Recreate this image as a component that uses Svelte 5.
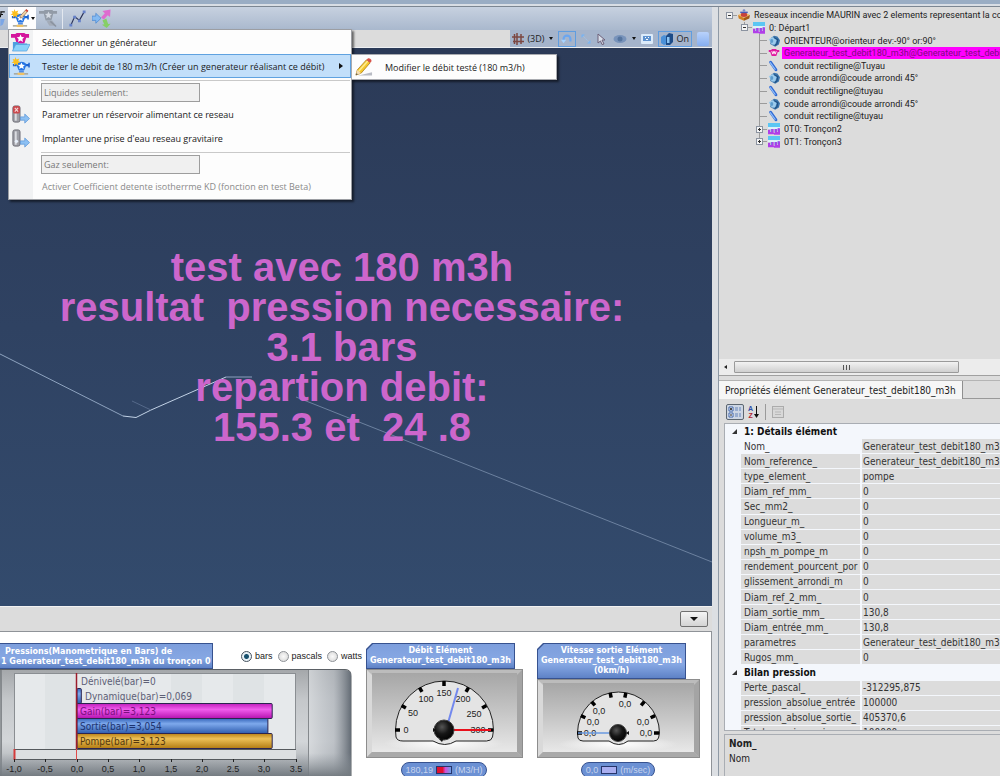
<script>
  const tree = [
    { depth: 0, box: '-', icon: 'network', label: 'Reseaux incendie MAURIN avec 2 elements representant la contrainte' },
    { depth: 1, box: '-', icon: 'section', label: '0: Départ1' },
    { depth: 2, icon: 'elbow', label: 'ORIENTEUR@orienteur dev:-90° or:90°' },
    { depth: 2, icon: 'pump', label: 'Generateur_test_debit180_m3h@Generateur_test_debit180_m3h', selected: true },
    { depth: 2, icon: 'pipe', label: 'conduit rectiligne@Tuyau' },
    { depth: 2, icon: 'elbow', label: 'coude arrondi@coude arrondi 45°' },
    { depth: 2, icon: 'pipe', label: 'conduit rectiligne@tuyau' },
    { depth: 2, icon: 'elbow', label: 'coude arrondi@coude arrondi 45°' },
    { depth: 2, icon: 'pipe', label: 'conduit rectiligne@tuyau' },
    { depth: 2, box: '+', icon: 'section', label: '0T0: Tronçon2' },
    { depth: 2, box: '+', icon: 'section', label: '0T1: Tronçon3', last: true }
  ];

  const groups = [
    {
      title: '1: Détails élément',
      rows: [
        ['Nom_', 'Generateur_test_debit180_m3h'],
        ['Nom_reference_', 'Generateur_test_debit180_m3h'],
        ['type_element_', 'pompe'],
        ['Diam_ref_mm_', '0'],
        ['Sec_mm2_', '0'],
        ['Longueur_m_', '0'],
        ['volume_m3_', '0'],
        ['npsh_m_pompe_m', '0'],
        ['rendement_pourcent_por', '0'],
        ['glissement_arrondi_m', '0'],
        ['Diam_ref_2_mm_', '0'],
        ['Diam_sortie_mm_', '130,8'],
        ['Diam_entrée_mm_', '130,8'],
        ['parametres', 'Generateur_test_debit180_m3h'],
        ['Rugos_mm_', '0']
      ]
    },
    {
      title: 'Bilan pression',
      rows: [
        ['Perte_pascal_', '-312295,875'],
        ['pression_absolue_entrée', '100000'],
        ['pression_absolue_sortie_', '405370,6'],
        ['Total_pression_gain_', '100000']
      ]
    }
  ];

  const bars = [
    { label: 'Dénivelé(bar)=0', value: 0, fill: '' },
    { label: 'Dynamique(bar)=0,069', value: 0.069, fill: 'url(#barBlue)' },
    { label: 'Gain(bar)=3,123', value: 3.123, fill: 'url(#barPink)' },
    { label: 'Sortie(bar)=3,054', value: 3.054, fill: 'url(#barBlue)' },
    { label: 'Pompe(bar)=3,123', value: 3.123, fill: 'url(#barGold)' }
  ];
  const axis = ['-1,0', '-0,5', '0,0', '0,5', '1,0', '1,5', '2,0', '2.5', '3,0', '3.5'];
  const axisX = (i) => 14 + Math.round(i * 31.3);

  const flowTicks = [180, 150, 120, 90, 60, 30, 0];
  const flowLabels = [
    ['0', 40, 64], ['50', 47, 47], ['100', 60, 33], ['150', 78, 27],
    ['200', 97, 33], ['250', 108, 48], ['300', 112, 64]
  ];
  const speedTicks = [180, 155, 130, 101, 79, 50, 25, 0];
  const speedLabels = [
    ['0,0', 53, 57], ['0,0', 56, 46], ['0,0', 62, 35],
    ['0,0', 88, 28], ['0,0', 106, 46], ['0,0', 109, 57]
  ];
  const tick = (cx, cy, r, a) => {
    const c = Math.cos((a * Math.PI) / 180);
    const s = Math.sin((a * Math.PI) / 180);
    return { x1: cx + c * (r - 5), y1: cy - s * (r - 5), x2: cx + c * r, y2: cy - s * r };
  };
  let unit = $state('bars');
</script>

{#snippet pumpIcon(pencil)}
  <svg class="ico" viewBox="0 0 20 20" aria-hidden="true">
    <path d="M2 8.500h4M14 8.500h5" stroke="#1d62cf" stroke-width="2.500" />
    <path d="M19 6v5" stroke="#1d62cf" stroke-width="1.600" />
    <path d="M5.500 7.500q5.500-5 11 0l-2.500 6.500H8z" fill="#2474e4" />
    <path d="M11 5.800l1.200 2.300 2.500.3-1.900 1.700.6 2.600-2.400-1.300-2.400 1.300.6-2.600-1.900-1.700 2.500-.3z" fill="#fff" />
    <path d="M8.500 14h5v2.500h-5z" fill="#4c8be8" />
    <path d="M3 17h15v1.500H3z" fill="#a3a397" />
    <path d="M7 16.500h7v2.500H7z" fill="#efc266" />
    <path d="M4.500 0l1.300 2.600L8.800 1.600 7.600 4.200l2.400 1.300-2.800.7.4 2.800-2.300-1.600L3 9.200l.3-2.800L.5 6l2.400-1.400L1.600 2l2.500.7z" fill="#fcbf1e" />
    {#if pencil}
      <path d="M11 7l6-6.500 2 1.500-6 7-2.500.5z" fill="#efcfa0" stroke="#8a6450" stroke-width=".7" />
      <path d="M16 1.600L17.300.3l2 1.500L18 3.200z" fill="#d6443a" />
    {/if}
  </svg>
{/snippet}

{#snippet tankIcon(red)}
  <svg class="ico" viewBox="0 0 20 20" aria-hidden="true">
    <rect x="2" y="1" width="7.500" height="17" rx="2" fill="#9fa0a7" stroke="#6b6c74" />
    <rect x="4" y="2.500" width="2" height="14" fill="#dcdde2" />
    {#if red}
      <rect x="2" y="1" width="7.500" height="8" rx="2" fill="#c94a4e" />
      <path d="M4 3l3.500 4M7.500 3L4 7" stroke="#f5d8d8" stroke-width="1.200" />
    {:else}
      <circle cx="5.700" cy="13" r="1.800" fill="#e8f0fb" />
    {/if}
    <path d="M10 12.500h4.500V9.500l5 4.800-5 4.700v-3H10z" fill="#8cc0f3" stroke="#5c97d8" stroke-width=".8" />
  </svg>
{/snippet}

{#snippet treeIcon(kind)}
  <svg class="tico" viewBox="0 0 16 16" aria-hidden="true">
    {#if kind === 'network'}
      <path d="M0 8l8-3.500L16 8l-8 4z" fill="#f5b557" />
      <path d="M0 8l8 4v3.500L1 12.500z" fill="#cf8023" />
      <path d="M16 8l-8 4v3.500l7-3z" fill="#a45a15" />
      <path d="M4 6q4-3 8 0v3.500q-4 2-8 0z" fill="#c8433b" /><path d="M3 3.500h10V5.500H3z" fill="#4a5cb4" />
      <circle cx="8" cy="2" r="1.800" fill="#7989c8" />
    {:else if kind === 'section'}
      <rect x="0" y="0" width="16" height="5.500" fill="#5cc6f3" />
      <rect x="0" y="5.500" width="16" height="2.500" fill="#dff3fb" />
      <path d="M0 15V9h3v3h1.500V8h3v5H9V8h3v4h1V7h3v8.500H8V15z" fill="#b13fe8" />
      <path d="M4.500 8v4M9.500 8v4M13.500 7v4" stroke="#5d6ce8" />
    {:else if kind === 'elbow'}
      <path d="M4 4l4-3 4.500 1L16 7l-1.500 5.500-5 3L3 12z" fill="#3a74ab" />
      <path d="M1 5.500l5.500-3 5 4.500-2 6-4.500-.5z" fill="#9ccbec" />
      <path d="M8 3.500l5 2.500-1 5.500-3 2.500" stroke="#1f4f82" stroke-width="1.400" fill="none" />
      <ellipse cx="5" cy="8" rx="2" ry="2.800" fill="#5c9bcc" />
    {:else if kind === 'pump'}
      <path d="M1 4h3l1.500-1.500h5L12 4h3v2.500h-2L11 12H5L3 6.500H1z" fill="#e0189f" />
      <path d="M5 5.500l1.500 4L8 5.500l1.500 4 1.500-4" stroke="#fff" stroke-width="1.200" fill="none" />
    {:else}
      <path d="M3.500 3l7 10" stroke="#2f6ad6" stroke-width="4" stroke-linecap="round" />
      <path d="M3 3.500l6.500 9" stroke="#92bef8" stroke-width="1.500" stroke-linecap="round" />
    {/if}
  </svg>
{/snippet}

<div class="app">
  <div class="strip"></div>
  <main class="left">
    <div class="toolbar">
      <svg class="cut" viewBox="0 0 6 20" aria-hidden="true">
        <path d="M0 2h5M1 2L0 8M0 5h3" stroke="#111" stroke-width="1.300" />
        <path d="M0 10h5l-2 6-3 2z" fill="#7ba6e6" />
      </svg>
      <div class="split">
        <button class="tool open" aria-label="Générateur">
          {@render pumpIcon(true)}
          <span class="caret"></span>
        </button>
        <div class="menu" role="menu">
          <button class="item" role="menuitem">
            <svg class="ico" viewBox="0 0 20 20" aria-hidden="true">
              <path d="M0 1h4.500l1.500-1h8l1.500 1H19v4h-3l-2 6H6L4 5H0z" fill="#d4149c" />
              <path d="M10 1.500l1.200 2.600 2.800.3-2 2 .6 3-2.600-1.500-2.600 1.500.6-3-2-2 2.800-.3z" fill="#fff" />
              <path d="M2 9.500h5l1.500 1.500H17V18H2z" fill="#4d9fe0" />
              <path d="M5 12h15l-3.500 7H1.500z" fill="#8bd2fa" stroke="#4d9cdc" stroke-width=".7" />
            </svg>
            <span>Sélectionner un générateur</span>
          </button>
          <div class="sub">
            <button class="item hot" role="menuitem">
              {@render pumpIcon(false)}
              <span>Tester le debit de 180 m3/h (Créer un generateur réalisant ce débit)</span>
              <i class="more"></i>
            </button>
            <div class="submenu" role="menu">
              <button class="item" role="menuitem">
                <svg class="ico" viewBox="0 0 20 20" aria-hidden="true">
                  <path d="M7 18l12-3v3.500H4z" fill="#b9bcc4" />
                  <path d="M2 18l1.500-5.500L13 2l4 3L7.500 16z" fill="#f5c72c" stroke="#a87912" stroke-width=".8" />
                  <path d="M5 14L14.500 3.200" stroke="#fdec92" stroke-width="1.500" />
                  <path d="M13 2l1.500-1.500c1.500-1 4.500 1 3.800 3L17 5z" fill="#d9534a" />
                  <path d="M2 18l1.500-5.500L7.500 16z" fill="#f4dcb4" /><path d="M2 18l.6-2 1.400 1.200z" fill="#333" />
                </svg>
                <span>Modifier le débit testé (180 m3/h)</span>
              </button>
            </div>
          </div>
          <div class="sep"></div>
          <input class="field" aria-label="Liquides" value="Liquides seulement:" readonly />
          <button class="item" role="menuitem">{@render tankIcon(true)}<span>Parametrer un réservoir alimentant ce reseau</span></button>
          <button class="item" role="menuitem">{@render tankIcon(false)}<span>Implanter une prise d'eau reseau gravitaire</span></button>
          <div class="sep"></div>
          <input class="field" aria-label="Gaz" value="Gaz seulement:" readonly />
          <button class="item" role="menuitem" disabled><span class="noicon">Activer Coefficient detente isotherrme KD (fonction en test Beta)</span></button>
        </div>
      </div>
      <button class="tool" aria-label="Pompe" disabled>
        <svg class="ico" viewBox="0 0 20 20" aria-hidden="true">
          <path d="M0 2h5l1-1h8l1 1h4v3h-4l-2 7H7L5 5H0z" fill="#929ba7" />
          <path d="M10 2.500l1.100 2.600 2.600.2-1.900 1.900.6 2.700-2.400-1.400-2.400 1.400.6-2.700-1.900-1.900 2.600-.2z" fill="#d3d9e2" />
          <path d="M8 13l3 4.500h7L14 12z" fill="#a3abb7" /><path d="M12 13l6 5.500" stroke="#8a93a0" stroke-width="1.500" />
        </svg>
      </button>
      <i class="vsep"></i>
      <button class="tool" aria-label="Tracé">
        <svg class="ico" viewBox="0 0 20 20" aria-hidden="true">
          <path d="M3 17l4-9 5 4 5-9" stroke="#2b3358" stroke-width="1.200" fill="none" />
          <path d="M1.500 15.500h3v3h-3zM5.500 7h3v3h-3zM10.500 11h3v3h-3zM15.500 1.500h3v3h-3z" fill="#6580c8" />
        </svg>
      </button>
      <button class="tool" aria-label="Répartition">
        <svg class="ico" viewBox="0 0 20 20" aria-hidden="true">
          <path d="M0 7.500h4V4.500l5.500 5.300L4 15v-3H0z" fill="#84baf2" stroke="#4a88d2" stroke-width=".8" />
          <path d="M9.500 9l4-4.500L11 2l8.500-1.500-.5 8-2.500-2L12.500 11z" fill="#de6ccf" />
          <path d="M11 12l2 4-2.500.5 5 3.500 4-4.500-2.500.2L15 10z" fill="#86cf66" />
        </svg>
      </button>
    </div>

    <div class="viewbar">
      <div class="viewtools">
        <button class="vt">
          <svg width="12" height="12" viewBox="0 0 12 12" aria-hidden="true"><path d="M2.500 1v10M5 0v12M9 1v10M0 4h12M1 8.500h11" stroke="#7c4742" stroke-width="1.500" /></svg>
          (3D)
        </button>
        <i class="caret"></i>
        <button class="vt on" aria-label="Rotation">
          <svg width="12" height="12" viewBox="0 0 14 14" aria-hidden="true"><path d="M3 10V7a4 4 0 018 0v3" fill="none" stroke="#6ba6f0" stroke-width="2.500" /><path d="M0 8l3 4 3-4z" fill="#a6d3ff" /></svg>
        </button>
        <button class="vt" aria-label="Déplacer">
          <svg width="10" height="12" viewBox="0 0 12 12" aria-hidden="true"><path d="M1 1h3L1 4zM11 8v3H8z" fill="#7eb4ee" stroke="#7eb4ee" /><path d="M3 3l6 6" stroke="#9cc8f4" stroke-dasharray="2 1.500" /></svg>
        </button>
        <button class="vt" aria-label="Sélection">
          <svg width="12" height="12" viewBox="0 0 12 12" aria-hidden="true"><path d="M2 1l7 6H6l2 4-2 .5L4.500 8 2 10z" fill="#d8deea" stroke="#6d6078" /></svg>
        </button>
        <button class="vt" aria-label="Visibilité">
          <svg width="14" height="10" viewBox="0 0 14 10" aria-hidden="true"><ellipse cx="7" cy="5" rx="6.500" ry="4" fill="#7893bb" /><circle cx="7" cy="5" r="2.500" fill="#54749f" /></svg>
        </button>
        <i class="caret"></i>
        <button class="vt" aria-label="Cadrer">
          <svg width="12" height="12" viewBox="0 0 12 12" aria-hidden="true"><rect x="0" y="1" width="12" height="10" rx="1" fill="#dcebfa" /><rect x="2" y="3" width="8" height="5" fill="#5f92cf" /><path d="M4 4h1v1H4zM7 4h1v1H7zM5 6h2v1H5z" fill="#fff" /></svg>
        </button>
        <button class="vt on">
          <svg width="12" height="12" viewBox="0 0 12 12" aria-hidden="true"><path d="M0 4l3-2 3 1v8l-3 1-3-2z" fill="#4a90d8" /><path d="M5 3l3-3 4 1v8l-3 3H5z" fill="#1d4c88" /><path d="M6 4h2.500v6H6z" fill="#8ac3f2" /></svg>
          On
        </button>
        <button class="vt swatch" aria-label="Fond"></button>
      </div>
    </div>

    <section class="scene">
      <svg class="lines" viewBox="0 0 712 558" preserveAspectRatio="none" aria-hidden="true">
        <g fill="none" stroke="#8ea3bf">
          <path d="M0 306L123 368" stroke-width="1" />
          <path d="M123 368L136 369.500 151 362 226 329" stroke="#c2d2e6" />
          <path d="M132 353L151 362" stroke="#55698a" />
          <path d="M226 329H252" stroke="#8ba0bd" />
          <path d="M296 349L712 514" stroke="#6c819f" />
        </g>
      </svg>
      <p class="caption">test avec 180 m3h<br />resultat&nbsp; pression necessaire:<br />3.1 bars<br />repartion debit:<br />155.3 et&nbsp; 24 .8</p>
    </section>

    <div class="dropbar"><button class="drop" aria-label="Réduire"><i></i></button></div>

    <section class="dash">
      <div class="pressure">
        <div class="head">
          <h2 class="plate wide"><span>Pressions(Manometrique en Bars) de</span><br />1 Generateur_test_debit180_m3h du tronçon 0</h2>
          <div class="units" role="radiogroup" aria-label="Unité">
            {#each ['bars', 'pascals', 'watts'] as u}
              <label><input type="radio" name="unit" value={u} bind:group={unit} />{u}</label>
            {/each}
          </div>
        </div>
        <svg class="chart" width="352" height="108" viewBox="0 0 352 108" role="img" aria-label="Pressions">
          <defs>
            <linearGradient id="metal" x1="0" y1="0" x2="0" y2="1">
              <stop offset="0" stop-color="#a4a7aa" /><stop offset=".25" stop-color="#c4c7ca" /><stop offset=".6" stop-color="#d3d6d9" /><stop offset="1" stop-color="#8e9398" />
            </linearGradient>
            <linearGradient id="side" x1="0" y1="0" x2="1" y2="0">
              <stop offset="0" stop-color="#d9dcdf" stop-opacity=".8" /><stop offset=".6" stop-color="#b4b9bf" stop-opacity=".7" /><stop offset="1" stop-color="#646c75" />
            </linearGradient>
            <linearGradient id="foot" x1="0" y1="0" x2="0" y2="1">
              <stop offset="0" stop-color="#8e959c" stop-opacity="0" /><stop offset="1" stop-color="#72797f" />
            </linearGradient>
            <linearGradient id="barPink" x1="0" y1="0" x2="0" y2="1"><stop offset="0" stop-color="#c01fbb" /><stop offset=".4" stop-color="#f05cec" /><stop offset="1" stop-color="#b512b0" /></linearGradient>
            <linearGradient id="barBlue" x1="0" y1="0" x2="0" y2="1"><stop offset="0" stop-color="#3767bb" /><stop offset=".35" stop-color="#7ea9ec" /><stop offset="1" stop-color="#2e5cae" /></linearGradient>
            <linearGradient id="barGold" x1="0" y1="0" x2="0" y2="1"><stop offset="0" stop-color="#b98116" /><stop offset=".35" stop-color="#edc057" /><stop offset="1" stop-color="#b27b12" /></linearGradient>
          </defs>
          <path d="M0 .5H345q6 0 6 6V120H0z" fill="url(#metal)" stroke="#5b6065" />
          <path d="M308 1H345q6 0 6 6V108H308z" fill="url(#side)" />
          <path d="M1.500 1v107M308.500 1v107" stroke="#85898d" />
          <rect x="0" y="84" width="351" height="24" fill="url(#foot)" />
          <rect x="14.500" y="4.500" width="281" height="86" fill="#e6e9eb" stroke="#8a8e92" />
          {#each axis as _, i}
            {#if i % 2 === 1 && i < 9}<rect x={axisX(i)} y="5" width="31" height="75" fill="#dfe3e5" />{/if}
          {/each}
          <rect x="15" y="80" width="281" height="10" fill="#dcdfe1" />
          <path d="M14 80.500H296M14 90.500H296" stroke="#55595d" />
          <path d="M14.500 80V91" stroke="#d43a3a" stroke-width="2" />
          {#each bars as b, i}
            {#if b.value}
              <rect x="77" y={19.500 + (i - 1) * 15} width={b.value * 62.500} height="15" rx="1" fill={b.fill} stroke="#2b2450" />
            {/if}
            <text x={i === 0 ? 81 : i === 1 ? 85 : 80} y={16 + i * 15} class="bar b{i}">{b.label}</text>
          {/each}
          <path d="M76.500 4V80" stroke="#9c1c2c" stroke-width="1.500" /><path d="M76.500 80V91" stroke="#e04a4a" />
          {#each axis as a, i}
            <path d="M{axisX(i) + 0.5} 90v3" stroke="#222" />
            <text x={axisX(i)} y="103" class="num" text-anchor="middle">{a}</text>
          {/each}
        </svg>
      </div>

      <div class="gauge">
        <div class="plate"><h2>Débit Elément<br />Generateur_test_debit180_m3h</h2></div>
        <svg class="dial" width="157" height="89" viewBox="0 0 157 89" role="img" aria-label="Débit">
          <defs>
            <linearGradient id="plateGrey" x1="0" y1="0" x2="0" y2="1"><stop offset="0" stop-color="#a6a6a6" /><stop offset=".5" stop-color="#c6c6c6" /><stop offset="1" stop-color="#e8e8e8" /></linearGradient>
            <radialGradient id="glow"><stop offset="0" stop-color="#fff" /><stop offset="1" stop-color="#fff" stop-opacity="0" /></radialGradient>
            <radialGradient id="knob" cx=".4" cy=".35" r=".7"><stop offset="0" stop-color="#555" /><stop offset=".5" stop-color="#161616" /><stop offset="1" stop-color="#000" /></radialGradient>
          </defs>
          <rect x=".5" y=".5" width="156" height="88" fill="#bcbcbc" stroke="#8d8d8d" />
          <path d="M1 1l5 5v77l-5 5z" fill="#d9d9d9" /><path d="M156 1l-5 5v77l5 5z" fill="#a4a4a4" /><path d="M1 88l5-5h145l5 5z" fill="#a9a9a9" />
          <rect x="6" y="4" width="145" height="79" fill="url(#plateGrey)" />
          <ellipse cx="78" cy="74" rx="60" ry="9" fill="url(#glow)" />
          <path d="M29.500 61a49 49 0 0198 0l-1 7q-1 4-6 4H90q-11 7-23 0H37q-6 0-7-4z" fill="#e4e4e4" stroke="#222" />
          {#each flowTicks as a}
            <line {...tick(78, 61, 49, a)} stroke="#000" stroke-width="3.500" />
          {/each}
          {#each flowLabels as [t, x, y]}
            <text {x} {y} class="num" text-anchor="middle">{t}</text>
          {/each}
          <path d="M80 61L92 19" stroke="#7288ee" stroke-width="2" />
          <path d="M78 61H125" stroke="#e8101c" stroke-width="2" />
          <circle cx="78" cy="61" r="10" fill="url(#knob)" stroke="#444" /><path d="M67 59v4l3-2zM73 70l5-1-2 4z" fill="#111" />
        </svg>
        <output class="pill">180,19 <i class="red"></i> (M3/H)</output>
      </div>

      <div class="gauge second">
        <div class="plate"><h2>Vitesse sortie Elément<br />Generateur_test_debit180_m3h<br />(0km/h)</h2></div>
        <svg class="dial" width="163" height="79" viewBox="0 0 163 79" role="img" aria-label="Vitesse">
          <rect x=".5" y=".5" width="162" height="78" fill="#bcbcbc" stroke="#8d8d8d" />
          <path d="M1 1l5 5v67l-5 5z" fill="#d9d9d9" /><path d="M162 1l-5 5v67l5 5z" fill="#a4a4a4" /><path d="M1 78l5-5h151l5 5z" fill="#a9a9a9" />
          <rect x="6" y="4" width="151" height="69" fill="url(#plateGrey)" />
          <ellipse cx="81" cy="65" rx="60" ry="8" fill="url(#glow)" />
          <path d="M40.500 54a41 41 0 0182 0l-1 5q-1 3-5 3H91q-9 7-19 0H46q-4 0-5-3z" fill="#e4e4e4" stroke="#222" />
          {#each speedTicks as a}
            <line {...tick(81, 54, 41, a)} stroke="#000" stroke-width="3.500" />
          {/each}
          {#each speedLabels as [t, x, y]}
            <text {x} {y} class="num" text-anchor="middle">{t}</text>
          {/each}
          <path d="M41 54H72" stroke="#6a9ae0" stroke-width="1.500" />
          <circle cx="81" cy="54" r="8.500" fill="url(#knob)" stroke="#444" /><path d="M92 52v4l-3-2z" fill="#111" />
        </svg>
        <output class="pill small">0,0 <i></i> (m/sec)</output>
      </div>
    </section>
  </main>

  <aside class="right">
    <ul class="tree" role="tree">
      {#each tree as n}
        <li role="treeitem" aria-selected={!!n.selected} class="d{n.depth}">
          <span class="joint" class:last={n.last} class:root={n.depth === 0}>
            {#if n.box}<b class:plus={n.box === '+'}></b>{/if}
          </span>
          {@render treeIcon(n.icon)}
          <span class="tlabel" class:sel={n.selected}>{n.label}</span>
        </li>
      {/each}
    </ul>
    <div class="hscroll"><i class="arrow"></i><span class="thumb"><i></i></span></div>

    <div class="tabs"><button class="tab">Propriétés élément Generateur_test_debit180_m3h</button></div>
    <div class="ptools">
      <button class="pt pressed" aria-label="Par catégorie">
        <svg width="14" height="12" viewBox="0 0 14 12" aria-hidden="true"><path d="M1 1h4v4H1zM1 7h4v4H1z" fill="#fff" stroke="#3c62a8" /><path d="M3 2v2M2 3h2M2 9h2" stroke="#111" /><path d="M7 2h3M11 2h2M7 4h3M11 4h2M7 8h3M11 8h2M7 10h3M11 10h2" stroke="#6584bb" /></svg>
      </button>
      <button class="pt az" aria-label="Alphabétique"><span><em>A</em><em>Z</em></span>
        <svg width="5" height="12" viewBox="0 0 5 12" aria-hidden="true"><path d="M2.500 0v9" stroke="#111" /><path d="M0 8h5L2.500 12z" fill="#111" /></svg>
      </button>
      <i class="psep"></i>
      <button class="pt" aria-label="Pages" disabled>
        <svg width="12" height="12" viewBox="0 0 12 12" aria-hidden="true"><rect x=".5" y=".5" width="11" height="11" fill="#d8d8d8" stroke="#ababab" /><path d="M1 3h10M3 6h6M3 8.500h6" stroke="#b7b7b7" /></svg>
      </button>
    </div>
    <div class="grid">
      <table>
        <colgroup><col class="c0" /><col class="c1" /><col /></colgroup>
        <tbody>
          {#each groups as g, gi}
            <tr class="cat"><td class="m"><i></i></td><th colspan="2">{g.title}</th></tr>
            {#each g.rows as r, ri}
              <tr class:current={gi === 0 && ri === 0}><td class="m"></td><td>{r[0]}</td><td>{r[1]}</td></tr>
            {/each}
          {/each}
        </tbody>
      </table>
    </div>
    <div class="help"><strong>Nom_</strong><span>Nom</span></div>
  </aside>
</div>

<style>
  :global(body) { margin: 0; background: #dcdcdc; }
  .app {
    display: grid;
    grid-template-columns: minmax(0, 719fr) minmax(0, 281fr);
    grid-template-rows: 7px minmax(0, 1fr);
    height: 100vh;
    overflow: hidden;
    font-family: "Open Sans", sans-serif;
    font-size: 9px;
    color: #222;
    background: #dcdcdc;
  }
  button { font: inherit; color: inherit; border: 0; background: none; padding: 0; margin: 0; }
  h2 { margin: 0; }
  .strip { grid-column: 1 / -1; box-sizing: border-box; background: #9aadc4; border-bottom: 1px solid #7c8692; box-shadow: inset 0 -2px #d8dde4; }

  .left { display: flex; flex-direction: column; min-width: 0; padding-right: 6px; border-right: 1px solid #8f9aa6; background: #dcdfe3; }
  .toolbar { display: flex; align-items: center; height: 23px; background: linear-gradient(#c7d1e0, #a9b8cd); }
  .cut { width: 6px; height: 18px; margin-right: 2px; }
  .split { position: relative; align-self: stretch; display: flex; }
  .tool { display: flex; align-items: center; justify-content: center; width: 24px; }
  .tool.open { width: 28px; gap: 2px; background: #fdfdfe; }
  .ico { width: 19px; height: 19px; flex: none; }
  .caret { border: 2px solid transparent; border-top: 3px solid #111; border-bottom: 0; width: 0; flex: none; }
  .vsep { width: 1px; height: 20px; margin: 0 2px; background: #e3e8ef; }

  .menu {
    position: absolute; z-index: 5; top: 22px; left: 0; width: 342px;
    display: flex; flex-direction: column; padding-bottom: 1px;
    border: 1px solid #9c9ea3; background: linear-gradient(90deg, #f1f2f3 24px, #fdfdfd 24px);
    box-shadow: 2px 2px 2px #0008;
    color: #1b1b1b;
  }
  .item { display: flex; align-items: center; height: 24px; width: 100%; padding: 0 2px; gap: 12px; text-align: left; white-space: nowrap; box-sizing: border-box; }
  .item:disabled { color: #8a8a8a; }
  .noicon { margin-left: 31px; }
  .hot { background: #c2dffa; box-shadow: inset 0 0 0 1px #5fa2e0; }
  .more { margin-left: auto; margin-right: 6px; border: 3px solid transparent; border-left: 4px solid #111; border-right: 0; }
  .sub { position: relative; }
  .submenu { position: absolute; left: 100%; top: 0; width: 206px; box-sizing: border-box; background: #fdfdfd; border: 1px solid #a9abb0; box-shadow: 2px 2px 2px #0008; }
  .sep { height: 1px; margin: 2px 1px 2px 32px; background: #c9c9c9; }
  .field { box-sizing: border-box; width: 159px; height: 19px; margin: 0 0 0 32px; padding: 0 2px; border: 1px solid #9d9d9d; background: #f0f0f0; color: #777; font: inherit; }

  .viewbar { display: flex; justify-content: flex-end; height: 17px; background: #dcdcdc; border-bottom: 1px solid #eef0f3; }
  .viewtools { display: flex; align-items: center; gap: 5px; padding: 0 3px 0 2px; background: #a5b4cb; }
  .vt { display: flex; align-items: center; justify-content: center; gap: 3px; height: 16px; }
  .vt.on { padding: 0 2px; box-sizing: border-box; border: 1px solid #5f9de0; }
  .swatch { width: 12px; height: 14px; border-radius: 2px; background: linear-gradient(#b9d2fb, #86aef0); }

  .scene { position: relative; flex: 1; min-height: 0; overflow: hidden; background: linear-gradient(#2b3a57, #2f4262 50%, #334b6d); }
  .lines { position: absolute; inset: 0; width: 100%; height: 100%; }
  .caption { position: relative; margin: 0; padding: 199px 28px 0 0; text-align: center; font: bold 40px/40px "Liberation Sans", Arial, sans-serif; color: #cc66cc; white-space: nowrap; }

  .dropbar { display: flex; justify-content: flex-end; align-items: center; height: 24px; padding-right: 4px; background: #dcdcdc; border-top: 1px solid #f1f1f1; }
  .drop { display: flex; align-items: center; justify-content: center; width: 28px; height: 16px; border: 1px solid #707070; border-radius: 2px; background: linear-gradient(#f4f4f4, #d4d4d4); box-sizing: border-box; }
  .drop i { border: 4px solid transparent; border-top: 4px solid #111; border-bottom: 0; }

  .dash { display: flex; height: 133px; padding-top: 11px; overflow: hidden; background: #fff; border-top: 1px solid #8f9398; border-right: 1px solid #8f9398; }
  .pressure { flex: 0 0 366px; }
  .head { display: flex; }
  .plate {
    font: bold 8px/10px "DejaVu Sans", sans-serif; color: #fff; text-align: center; white-space: nowrap;
    background: #37528f; padding: 1px; box-sizing: border-box;
  }
  .wide { width: 213px; height: 26px; padding: 3px 0 0 1px; text-align: left; background: linear-gradient(#7d9edc, #86a7e3 60%, #5e82c6); border: 1px solid #37528f; border-left: 0; }
  .wide span { margin-left: 4px; }
  .units { display: flex; align-items: center; gap: 5px; margin-left: 28px; font: 9px/12px "Liberation Sans", Arial, sans-serif; }
  .units label { display: flex; align-items: center; gap: 3px; }
  .units input {
    appearance: none; box-sizing: border-box; width: 11px; height: 11px; margin: 0; border: 1px solid #8d9196; border-radius: 50%;
    background: radial-gradient(#fafafa, #d5d5d5);
  }
  .units input:checked { border-color: #46525e; background: radial-gradient(circle, #17506e 0 2px, #e8f1f6 3px); }
  .chart, .dial { display: block; }
  .bar { font: 10px "DejaVu Sans Condensed", "DejaVu Sans", sans-serif; fill: #5d6076; }
  .b2 { fill: #7c0f80; }
  .b3 { fill: #1d3470; }
  .b4 { fill: #553a10; }
  .num { font: 9px "Liberation Sans", Arial, sans-serif; fill: #222; }

  .gauge { width: 157px; margin-right: 14px; flex: none; }
  .second { width: 163px; margin-right: 0; }
  .gauge .plate { width: 149px; clip-path: polygon(6px 0, 100% 0, 100% 100%, 0 100%, 0 6px); }
  .gauge h2 { font: inherit; padding: 2px 0; background: linear-gradient(#7d9edc, #86a7e3 60%, #5e82c6); clip-path: polygon(6px 0, 100% 0, 100% 100%, 0 100%, 0 6px); }
  .pill { display: flex; align-items: center; justify-content: center; gap: 3px; width: 86px; height: 16px; box-sizing: border-box; margin: 4px 0 0 35px; border: 1px solid #37528f; border-radius: 8px; background: #6c91d4; color: #c8d4ec; font: 9px "Liberation Sans", Arial, sans-serif; }
  .pill i { width: 14px; height: 6px; border: 1px solid #26356b; background: #a9aef0; }
  .pill .red { background: linear-gradient(90deg, #e01030 40%, #d050d8 60%, #6aa0e8); }
  .small { width: 74px; margin-left: 44px; }

  .right { display: flex; flex-direction: column; min-width: 0; background: #dcdcdc; }
  .tree { flex: none; display: grid; grid-auto-rows: 1fr; height: 139px; margin: 0; padding: 2px 0 0 3px; list-style: none; overflow: hidden; font: 9px Roboto, Arial, sans-serif; }
  .tree li { display: flex; align-items: center; min-height: 0; white-space: nowrap; }
  .tree .d1 { padding-left: 15px; }
  .tree .d2 { padding-left: 30px; }
  .joint { position: relative; align-self: stretch; display: flex; align-items: center; justify-content: center; width: 15px; flex: none; background: linear-gradient(#9b9b9b, #9b9b9b) 7px 0 / 1px 100% no-repeat, linear-gradient(#9b9b9b, #9b9b9b) 7px 50% / 8px 1px no-repeat; }
  .joint.last { background-size: 1px 50%, 8px 1px; }
  .joint.root { background-size: 0 0, 8px 1px; }
  .d1 .joint { background-size: 1px 50%, 8px 1px; }
  .joint b { width: 5px; height: 5px; border: 1px solid #8b93a0; background: linear-gradient(#333, #333) 50% 50% / 3px 1px no-repeat, #f4f4f4; }
  .joint b.plus { background: linear-gradient(#333, #333) 50% 50% / 3px 1px no-repeat, linear-gradient(#333, #333) 50% 50% / 1px 3px no-repeat, #f4f4f4; }
  .tico { width: 14px; height: 12px; flex: none; }
  .tlabel { padding: 0 2px; margin-left: 1px; line-height: 12px; }
  .sel { background: #ff00ff; color: #7d0a7d; }

  .hscroll { display: flex; align-items: center; height: 16px; margin-top: auto; background: #ececec; border-bottom: 1px solid #a0a0a0; flex: none; }
  .arrow { margin: 0 7px 0 5px; border: 2px solid transparent; border-right: 3px solid #222; border-left: 0; }
  .thumb { display: flex; justify-content: center; align-items: center; box-sizing: border-box; width: 80%; height: 12px; border: 1px solid #9a9a9a; border-radius: 1px; background: linear-gradient(#f2f2f2, #cfcfcf); }
  .thumb i { width: 7px; height: 5px; background: repeating-linear-gradient(90deg, #555 0 1px, transparent 1px 3px); }

  .tabs { display: flex; margin-top: 4px; font: 10px "DejaVu Sans Condensed", "DejaVu Sans", sans-serif; border-top: 1px solid #b4b4b4; flex: none; }
  .tabs::after { content: ""; flex: 1; border-bottom: 1px solid #999; }
  .tab { height: 18px; padding: 0 6px; background: #f6f6f6; border-right: 1px solid #8f8f8f; white-space: nowrap; }
  .ptools { display: flex; align-items: center; gap: 4px; height: 22px; margin-top: 2px; padding-left: 7px; flex: none; }
  .pt { display: flex; align-items: center; }
  .pressed { padding: 1px; border: 1px solid #5c6670; border-radius: 2px; background: #cdd6e4; }
  .az span { display: flex; flex-direction: column; font: bold 7px/7px "Liberation Sans", Arial, sans-serif; color: #b02432; }
  .az em { font-style: normal; }
  .az em:first-child { color: #2c4da8; }
  .az { gap: 1px; }
  .psep { width: 1px; height: 16px; margin: 0 2px; background: #9a9a9a; }

  .grid { height: 308px; overflow: hidden; margin-left: 5px; border: 1px solid #a9adb3; border-right: 0; box-sizing: border-box; background: #f4f7fc; font: 10px/13px "DejaVu Sans Condensed", "DejaVu Sans", sans-serif; flex: none; }
  table { width: 100%; height: 317px; table-layout: fixed; border-collapse: collapse; }
  .c0 { width: 16px; }
  .c1 { width: 120px; }
  td, th { padding: 0 0 0 3px; overflow: hidden; white-space: nowrap; text-align: left; border-bottom: 1px solid #f4f7fc; }
  td { background: #dcdcdc; color: #333; }
  td:nth-child(2) { border-right: 2px solid #f4f7fc; }
  td:nth-child(3) { padding-left: 1px; }
  .current td:nth-child(2), td.m { background: #f4f7fc; }
  td.m { padding: 0; }
  th { font-weight: bold; color: #111; }
  .m i { display: block; width: 0; margin-left: 7px; border-left: 5px solid transparent; border-bottom: 5px solid #333; }
  .help { display: flex; flex-direction: column; gap: 1px; height: 42px; box-sizing: border-box; margin: 3px 0 0 5px; padding: 2px 4px; border: 1px solid #a9adb3; border-right: 0; border-bottom: 0; font: 10px/14px "DejaVu Sans Condensed", "DejaVu Sans", sans-serif; flex: none; }
</style>
